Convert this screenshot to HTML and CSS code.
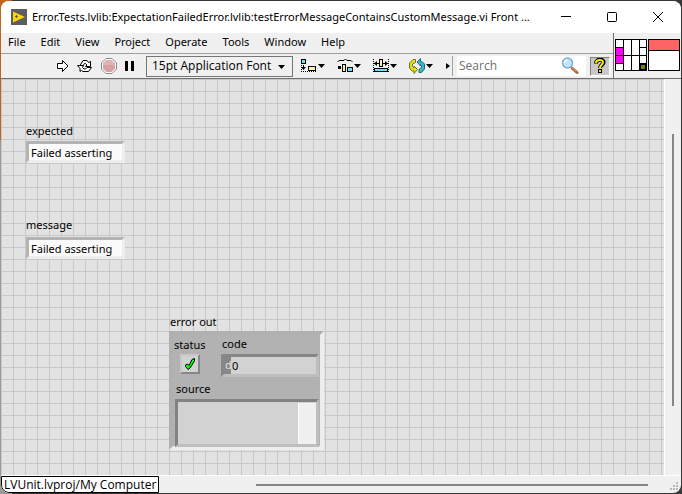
FILE: index.html
```html
<!DOCTYPE html>
<html lang="en">
<head>
<meta charset="utf-8">
<title>testErrorMessageContainsCustomMessage.vi Front Panel</title>
<link rel="stylesheet" href="styles.css">
</head>
<body>
<div class="window">
  <header class="titlebar">
    <svg class="app-icon" width="16" height="16" viewBox="0 0 16 16"><rect width="16" height="16" fill="#5b5d60"/><path d="M2 2.500L14 8L2 13.500z" fill="#ffd500"/><path d="M4 7.500h3M5.500 6v3" stroke="#5b5d60"/></svg>
    <h1 class="title">Error.Tests.lvlib:ExpectationFailedError.lvlib:testErrorMessageContainsCustomMessage.vi Front ...</h1>
    <div class="caption-buttons">
      <button aria-label="Minimize"><svg width="12" height="12" viewBox="0 0 12 12"><path d="M1 5.500h10" stroke="#000"/></svg></button>
      <button aria-label="Maximize"><svg width="12" height="12" viewBox="0 0 12 12"><rect x="1.500" y="1.500" width="9" height="9" rx="1" fill="none" stroke="#000"/></svg></button>
      <button aria-label="Close"><svg width="12" height="12" viewBox="0 0 12 12"><path d="M1 1l10 10M11 1L1 11" stroke="#000"/></svg></button>
    </div>
  </header>
  <div class="top">
    <div class="bars">
      <nav class="menubar">
        <a href="#file">File</a><a href="#edit">Edit</a><a href="#view">View</a><a href="#project">Project</a><a href="#operate">Operate</a><a href="#tools">Tools</a><a href="#window">Window</a><a href="#help">Help</a>
      </nav>
      <div class="toolbar">
        <div class="run-group">
          <button aria-label="Run"><svg width="12" height="14" viewBox="0 0 12 14"><path d="M.5 4.500H5.500V1.500L11 7L5.500 12.500V9.500H.5z" fill="#fff" stroke="#000"/></svg></button>
          <button aria-label="Run continuously"><svg width="16" height="14" viewBox="0 0 16 14"><path d="M3 6.500L6 1.500H10L11.500 3.500L13.500 2.500V7.500H8.500L10 6L8.500 4.500H7.500L6 6.500z" fill="#fff" stroke="#000"/><path d="M.5 6.500H6.500L5.500 8.500L7 10H8.500L10 8.500H14.500L11.500 12.500H6L4.500 11.500L3 12.500V9.500z" fill="#fff" stroke="#000"/></svg></button>
          <button aria-label="Abort"><svg width="16" height="16" viewBox="0 0 16 16"><path d="M5 .5h6L15.500 5v6L11 15.500H5L.5 11V5z" fill="#fff" stroke="#8a8a8a"/><path d="M5.500 2h5L14 5.500v5L10.500 14h-5L2 10.500v-5z" fill="#d8a0a0"/><path d="M5.500 2h5L14 5.500V7H2V5.500z" fill="#e0b4b4"/></svg></button>
          <button aria-label="Pause"><svg width="10" height="12" viewBox="0 0 10 12"><path d="M0 1h3v10H0zM6 1h3v10H6z" fill="#000"/></svg></button>
        </div>
        <div class="font-box">
          <select aria-label="Font"><option>15pt Application Font</option></select>
          <svg class="font-arrow" width="7" height="4" viewBox="0 0 7 4"><path d="M0 0h7L3.500 4z"/></svg>
        </div>
        <div class="layout-group">
          <button aria-label="Align objects"><svg width="24" height="16" viewBox="0 0 24 16"><rect x=".5" y="1.500" width="4" height="4" fill="#75dcf5" stroke="#000"/><path d="M0 13.500h15M.5 7v6" stroke="#000" stroke-dasharray="1 1"/><path d="M2 7h1v2h2L2.500 12L0 9h2z"/><rect x="7.500" y="8.500" width="7" height="4" fill="#fff3a0" stroke="#000"/><path d="M17 6h7l-3.500 4z"/></svg></button>
          <button aria-label="Distribute objects"><svg width="24" height="16" viewBox="0 0 24 16"><path d="M.5 4L2 2.500H7L8.500 1L10 2.500H14L15.500 4" fill="none" stroke="#000"/><path d="M1 8h3v3H1z"/><rect x="5.500" y="6.500" width="3" height="7" fill="#fff3a0" stroke="#000"/><rect x="10.500" y="9.500" width="5" height="4" fill="#75dcf5" stroke="#000"/><path d="M17 6h7l-3.500 4z"/></svg></button>
          <button aria-label="Resize objects"><svg width="24" height="16" viewBox="0 0 24 16"><path d="M.5 1v13M15.500 1v13" stroke="#000" stroke-dasharray="1 1"/><path d="M1 5.500h14" stroke="#000"/><path d="M1 5.500L4 3v5zM15 5.500L12 3v5z"/><rect x="6.500" y="1.500" width="3" height="7" fill="#fff3a0" stroke="#000"/><rect x="1.500" y="10.500" width="13" height="3" fill="#75dcf5" stroke="#000"/><path d="M17 6h7l-3.500 4z"/></svg></button>
          <button aria-label="Reorder"><svg width="24" height="16" viewBox="0 0 24 16"><path d="M6.500 1.500H4L.5 5V10L3 13H5V15.500L8.500 11.500L5 8V10L3.500 8.500V6L6.500 4.500z" fill="#e6df20" stroke="#777316"/><path d="M10 14.500H12.500L15.500 11V6L13 3.500H11.500V.5L8 4L11.500 8V6.500L12.500 8V9.500L10 11.500z" fill="#39b5cc" stroke="#226c7a"/><path d="M17 6h7l-3.500 4z"/></svg></button>
        </div>
        <svg class="more" width="5" height="6" viewBox="0 0 5 6"><path d="M0 0v6l4-3z"/></svg>
        <label class="search">
          <input type="text" placeholder="Search" aria-label="Search">
          <svg width="18" height="18" viewBox="0 0 18 18"><path d="M9 9l3 3" stroke="#999" stroke-width="2"/><path d="M11.500 11.500L16 15.500" stroke="#a9663b" stroke-width="3" stroke-linecap="round"/><path d="M11.500 11L15.500 14.500" stroke="#e9a26f"/><circle cx="6.500" cy="6" r="5" fill="#bfe5fb" stroke="#79acd9" stroke-width="1.500"/><path d="M3.500 6a3 3 0 0 1 3-3" fill="none" stroke="#fff" stroke-width="1.500"/></svg>
        </label>
        <button class="help" aria-label="Context help"><svg width="12" height="16" viewBox="0 0 12 16"><path d="M2 5.500C2 0 10 1 9.500 4.500C9 7 6 7 6 10" fill="none" stroke="#000" stroke-width="4"/><path d="M4 11h4v4H4z"/><path d="M2 5C2 1 9.500 1 9 4.500C8.500 7 6 7 6 10" fill="none" stroke="#f5ee00" stroke-width="2"/><path d="M5 12h2v2H5z" fill="#f5ee00"/></svg></button>
      </div>
    </div>
    <div class="vi-icons">
      <svg width="32" height="32" viewBox="0 0 32 32"><rect x=".5" y=".5" width="31" height="31" fill="#fff" stroke="#000"/><path d="M1 8h7v16H1z" fill="#f0f"/><path d="M8.500 0v32M16.500 0v32M24.500 0v32M0 8.500h8M0 16.500h32M0 24.500h8M24 8.500h8M24 24.500h8" stroke="#000"/><path d="M24 24h8v8h-8z"/><path d="M26 26h4v4h-4z" fill="#808000"/></svg>
      <svg width="32" height="32" viewBox="0 0 32 32"><rect x=".5" y=".5" width="31" height="31" fill="#fff" stroke="#000"/><path d="M1 1h30v10H1z" fill="#ff6464"/><path d="M0 11.500h32" stroke="#000"/></svg>
    </div>
  </div>
  <main class="workspace">
    <section class="panel">
      <div class="item expected">
        <label for="expected">expected</label>
        <input class="text-box" id="expected" type="text" value="Failed asserting">
      </div>
      <div class="item message">
        <label for="message">message</label>
        <input class="text-box" id="message" type="text" value="Failed asserting">
      </div>
      <div class="item error-out">
        <h2>error out</h2>
        <div class="cluster">
          <div class="cluster-row">
            <div class="status">
              <label for="status">status</label>
              <button class="led" id="status"><svg width="12" height="14" viewBox="0 0 12 14"><path d="M1.500 8L3.500 7L5 8.500L8 2.500L10.500 1.500V4L6 11L4 12.500L1.500 9.500z" fill="#0f0" stroke="#000"/></svg></button>
            </div>
            <div class="code">
              <label for="code">code</label>
              <div class="number"><span class="radix">d</span><input id="code" type="text" value="0"></div>
            </div>
          </div>
          <label class="source-label" for="source">source</label>
          <div class="source"><textarea id="source"></textarea><div class="source-bar"></div></div>
        </div>
      </div>
    </section>
    <div class="v-scroll"><div class="v-thumb"></div></div>
  </main>
  <footer class="statusbar">
    <button class="target">LVUnit.lvproj/My Computer</button>
    <div class="h-scroll"><div class="h-thumb"></div></div>
    <svg class="grip" width="9" height="9" viewBox="0 0 9 9"><path d="M6 0h2v2H6zM3 3h2v2H3zM6 3h2v2H6zM0 6h2v2H0zM3 6h2v2H3zM6 6h2v2H6z" fill="#bababa"/></svg>
  </footer>
</div>
</body>
</html>
```
FILE: styles.css
```css
* { box-sizing: border-box; }

body {
  margin: 0;
  height: 100vh;
  padding: 1px;
  background: linear-gradient(#c0651a 0 140px, #9a9a9a 140px) 0 0 / 12px 100% no-repeat, #383838;
  font: 11px/16px "Noto Sans", "Open Sans", sans-serif;
  color: #000;
}

button, input, select, textarea {
  font: inherit;
  color: inherit;
  margin: 0;
  padding: 0;
  border: 0;
  border-radius: 0;
  background: none;
  outline: 0;
}

button { display: flex; align-items: center; justify-content: center; }
svg { display: block; flex: none; }

.window {
  height: 100%;
  display: flex;
  flex-direction: column;
  overflow: hidden;
  border-radius: 8px;
  background: #f0f0f0;
}

.titlebar {
  display: flex;
  align-items: center;
  height: 32px;
  flex: none;
  padding-left: 10px;
  background: #fff;
}

.title {
  flex: 1;
  min-width: 0;
  margin: 0 0 0 5px;
  font-size: 11px;
  font-weight: 400;
  white-space: nowrap;
}

.caption-buttons { display: flex; }
.caption-buttons button { width: 46px; height: 30px; }

.top { display: flex; flex: none; border-bottom: 1px solid #6e6e6e; }
.bars { flex: 1; min-width: 0; }

.menubar {
  display: flex;
  gap: 15px;
  height: 21px;
  padding: 1px 7px;
  border-bottom: 1px solid #a0a0a0;
}

.menubar a { color: inherit; text-decoration: none; }

.toolbar {
  display: flex;
  align-items: center;
  height: 24px;
  padding: 0 3px 0 56px;
  font-family: "Open Sans", "Noto Sans", sans-serif;
  font-size: 12px;
}

.run-group { display: flex; align-items: center; gap: 8px; }

.font-box { position: relative; width: 147px; margin-left: 11px; }

.font-box select {
  display: block;
  width: 100%;
  height: 21px;
  padding: 0 5px;
  border: 1px solid #767676;
  appearance: none;
}

.font-arrow { position: absolute; right: 8px; top: 9px; pointer-events: none; }

.layout-group { display: flex; gap: 12px; margin-left: 8px; }
.more { margin-left: 13px; }

.search {
  display: flex;
  flex: 1;
  align-items: center;
  min-width: 0;
  height: 20px;
  margin-left: 6px;
  padding: 0 7px 0 2px;
  background: #fff;
  box-shadow: -4px 0 #f0f0f0, -5px 0 #a0a0a0;
}

.search input { flex: 1; width: 0; min-width: 0; }
.search input::placeholder { color: #707070; opacity: 1; }

.help {
  width: 20px;
  height: 19px;
  margin-left: 4px;
  border: 1px solid;
  border-color: #808080 #fff #fff #808080;
  background: #c8c8c8;
}

.vi-icons {
  display: flex;
  gap: 1px;
  padding: 6px 1px 0 1px;
  border-left: 1px solid #6e6e6e;
}

.workspace { display: flex; flex: 1; min-height: 0; }

.panel {
  position: relative;
  flex: 1;
  overflow: hidden;
  background: linear-gradient(90deg, #c8c8c8 1px, transparent 1px) 0 0 / 12px 12px, linear-gradient(#c8c8c8 1px, transparent 1px) 0 0 / 12px 12px, #e2e2e2;
}

.item { position: absolute; }
.item label, .item h2 { display: block; margin: 0; font-size: 11px; font-weight: 400; line-height: 16px; }

.expected { left: 25px; top: 44px; }
.message { left: 25px; top: 138px; }
.error-out { left: 168px; top: 235px; }

.text-box {
  display: block;
  width: 99px;
  height: 22px;
  margin-top: 2px;
  padding: 0 2px;
  border: 3px solid;
  border-color: #b4b4b4 #ededed #ededed #b4b4b4;
  background: #fafafa;
}

.message .text-box { margin-top: 4px; }
.error-out h2 { padding-left: 1px; }

.cluster {
  width: 155px;
  height: 119px;
  margin-top: 1px;
  padding: 1px 1px 1px;
  border: 4px solid;
  border-color: #b0b0b0 #ededed #ededed #b0b0b0;
  background: #b2b2b2;
}

.cluster-row { display: flex; justify-content: space-between; }
.status { margin-top: 1px; }

.led {
  width: 20px;
  height: 20px;
  margin: 1px 0 0 6px;
  border: 2px solid;
  border-color: #c8c8c8 #878787 #878787 #c8c8c8;
  background: #d2d2d2;
}

.code { width: 98px; }
.code label { padding-left: 1px; }

.number {
  display: flex;
  height: 23px;
  margin-top: 2px;
  border: 3px solid;
  border-color: #878787 #bebebe #bebebe #878787;
  background: #d2d2d2;
}

.radix { width: 7px; padding-left: 1px; overflow: hidden; background: #878787; color: #e0e0e0; line-height: 16px; }
.number input { flex: 1; width: 0; padding-left: 1px; }
.cluster .source-label { margin: 4px 0 2px 2px; }

.source {
  display: flex;
  height: 48px;
  margin-left: 1px;
  border: 3px solid;
  border-color: #828282 #bebebe #bebebe #828282;
  background: #d2d2d2;
}

.source textarea { flex: 1; width: 0; resize: none; }
.source-bar { width: 18px; margin-top: 1px; border-left: 1px solid #fff; background: #f0f0f0; }

.v-scroll { width: 17px; padding: 55px 8px 69px 7px; border-left: 1px solid #fff; }
.v-thumb { width: 2px; height: 100%; background: #858585; }

.statusbar {
  display: flex;
  flex: none;
  height: 18px;
  border-top: 1px solid #fff;
}

.target {
  height: 17px;
  padding: 0 2px;
  border: 1px solid #000;
  border-bottom-left-radius: 8px;
  background: #fff;
  font-family: "Open Sans", "Noto Sans", sans-serif;
  font-size: 12px;
  white-space: nowrap;
}

.h-scroll { flex: 1; padding: 8px 22px 0 97px; }
.h-thumb { height: 2px; background: #858585; }
.grip { margin: 6px 2px 0 0; }
```
